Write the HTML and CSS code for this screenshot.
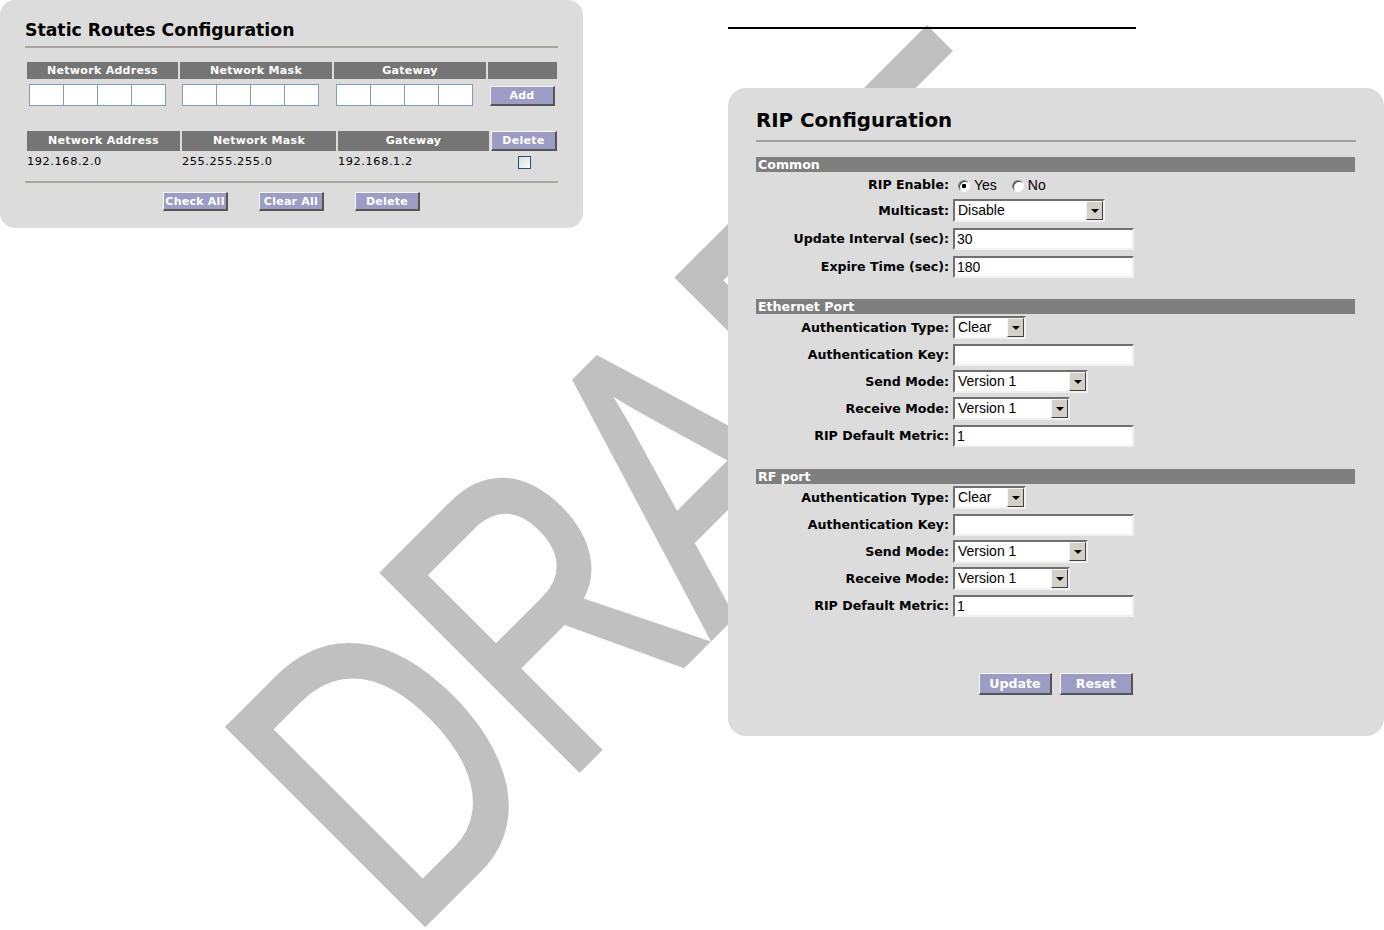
FILE: index.html
```html
<!DOCTYPE html>
<html lang="en">
	<head>
		<meta charset="utf-8">
		<title>Static Routes / RIP Configuration</title>
		<link rel="stylesheet" href="styles.css">
	</head>
	<body>

		<div class="page">

			<div class="watermark">D<span class="wm-r">R</span><span class="wm-a">A</span><span class="wm-f">F</span>T</div>

			<!-- static routes -->
			<div class="col-left">
				<div class="panel static-panel">
					<h2 class="static-title">Static Routes Configuration</h2>

					<table class="route-table add-table">
						<colgroup><col style="width:151px"><col style="width:152px"><col style="width:152px"><col style="width:69px"></colgroup>
						<tr>
							<th>Network Address</th>
							<th>Network Mask</th>
							<th>Gateway</th>
							<th></th>
						</tr>
						<tr>
							<td><div class="ip-group"><input class="ip-box" type="text"><input class="ip-box" type="text"><input class="ip-box" type="text"><input class="ip-box" type="text"></div></td>
							<td><div class="ip-group"><input class="ip-box" type="text"><input class="ip-box" type="text"><input class="ip-box" type="text"><input class="ip-box" type="text"></div></td>
							<td><div class="ip-group"><input class="ip-box" type="text"><input class="ip-box" type="text"><input class="ip-box" type="text"><input class="ip-box" type="text"></div></td>
							<td><button class="btn btn-add">Add</button></td>
						</tr>
					</table>

					<table class="route-table list-table">
						<colgroup><col style="width:153px"><col style="width:154px"><col style="width:151px"><col style="width:66px"></colgroup>
						<tr>
							<th>Network Address</th>
							<th>Network Mask</th>
							<th>Gateway</th>
							<th class="th-btn">Delete</th>
						</tr>
						<tr>
							<td>192.168.2.0</td>
							<td>255.255.255.0</td>
							<td>192.168.1.2</td>
							<td><input class="check" type="checkbox"></td>
						</tr>
					</table>

					<div class="rule"></div>

					<div class="btn-row">
						<button class="btn">Check All</button>
						<button class="btn">Clear All</button>
						<button class="btn">Delete</button>
					</div>
				</div>
			</div>

			<!-- rip -->
			<div class="col-right">
				<div class="top-rule"></div>

				<div class="panel rip-panel">
					<h2 class="rip-title">RIP Configuration</h2>

					<div class="section section-first">
						<div class="section-bar">Common</div>
						<div class="form-rows common-rows">
							<div class="form-row radio-row">
								<label>RIP Enable:</label>
								<div class="radio-group">
									<input class="radio" type="radio" name="rip" checked><span>Yes</span>
									<input class="radio radio-no" type="radio" name="rip"><span>No</span>
								</div>
							</div>
							<div class="form-row">
								<label>Multicast:</label>
								<div class="select w-multi"><span class="select-value">Disable</span><span class="select-arrow"></span></div>
							</div>
							<div class="form-row">
								<label>Update Interval (sec):</label>
								<input class="text-input" type="text" value="30">
							</div>
							<div class="form-row">
								<label>Expire Time (sec):</label>
								<input class="text-input" type="text" value="180">
							</div>
						</div>
					</div>

					<div class="section">
						<div class="section-bar">Ethernet Port</div>
						<div class="form-rows">
							<div class="form-row">
								<label>Authentication Type:</label>
								<div class="select w-auth"><span class="select-value">Clear</span><span class="select-arrow"></span></div>
							</div>
							<div class="form-row">
								<label>Authentication Key:</label>
								<input class="text-input" type="text">
							</div>
							<div class="form-row">
								<label>Send Mode:</label>
								<div class="select w-send"><span class="select-value">Version 1</span><span class="select-arrow"></span></div>
							</div>
							<div class="form-row">
								<label>Receive Mode:</label>
								<div class="select w-recv"><span class="select-value">Version 1</span><span class="select-arrow"></span></div>
							</div>
							<div class="form-row">
								<label>RIP Default Metric:</label>
								<input class="text-input" type="text" value="1">
							</div>
						</div>
					</div>

					<div class="section section-rf">
						<div class="section-bar">RF port</div>
						<div class="form-rows">
							<div class="form-row">
								<label>Authentication Type:</label>
								<div class="select w-auth"><span class="select-value">Clear</span><span class="select-arrow"></span></div>
							</div>
							<div class="form-row">
								<label>Authentication Key:</label>
								<input class="text-input" type="text">
							</div>
							<div class="form-row">
								<label>Send Mode:</label>
								<div class="select w-send"><span class="select-value">Version 1</span><span class="select-arrow"></span></div>
							</div>
							<div class="form-row">
								<label>Receive Mode:</label>
								<div class="select w-recv"><span class="select-value">Version 1</span><span class="select-arrow"></span></div>
							</div>
							<div class="form-row">
								<label>RIP Default Metric:</label>
								<input class="text-input" type="text" value="1">
							</div>
						</div>
					</div>

					<div class="rip-buttons">
						<button class="btn btn-lg">Update</button>
						<button class="btn btn-lg">Reset</button>
					</div>
				</div>
			</div>

		</div>

	</body>
</html>
```

FILE: styles.css
```css
body {
	margin: 0;
	background-color: #fff;
	color: #000;
	font-family: "DejaVu Sans", Verdana, sans-serif;
}

.page {
	position: relative;
	display: flex;
	align-items: flex-start;
	gap: 145px;
	width: 1384px;
	height: 930px;
	overflow: hidden;
}

/* big grey DRAFT stamp behind everything */
.watermark {
	position: absolute;
	left: 0;
	top: 0;
	z-index: 0;
	font-family: "Liberation Sans", Arial, sans-serif;
	font-size: 403px;
	line-height: 1;
	color: #c0c0c0;
	-webkit-text-stroke: 6px #c0c0c0;
	white-space: nowrap;
	transform-origin: 0 0;
	transform: translate(166px, 700px) rotate(-45deg) scaleX(0.75);
	pointer-events: none;
}

.wm-r { letter-spacing: -0.023em; }
.wm-a { letter-spacing: 0.015em; }
.wm-f { letter-spacing: 0.05em; }

.col-left,
.col-right {
	position: relative;
	z-index: 1;
}

.col-left {
	width: 583px;
}

.col-right {
	width: 656px;
}

.panel {
	background-color: #dcdcdc;
	border-radius: 15px;
	box-sizing: border-box;
}

/* ---- static routes ---- */

.static-panel {
	width: 583px;
	height: 228px;
	padding: 19px 25px 0;
}

.static-title {
	margin: 0;
	font-size: 17.3px;
	font-weight: bold;
	line-height: 22px;
	padding-bottom: 5px;
	border-bottom: 2px solid #a8a59d;
}

.route-table {
	table-layout: fixed;
	border-collapse: separate;
	border-spacing: 2px;
	width: 534px;
}

.route-table th {
	padding: 0;
	background-color: #757575;
	color: #fff;
	font-size: 11px;
	font-weight: bold;
	letter-spacing: 0.3px;
	text-align: center;
}

.route-table td {
	padding: 0;
	vertical-align: top;
}

.add-table {
	margin-top: 12px;
}

.add-table th {
	line-height: 17px;
}

.add-table td {
	padding: 3px 0 0 2px;
}

.ip-group {
	display: flex;
}

.ip-box {
	width: 35px;
	height: 22px;
	box-sizing: border-box;
	margin: 0 0 0 -1px;
	padding: 0;
	border: 1px solid #7f9db9;
	background-color: #fff;
}

.ip-box:first-child {
	margin-left: 0;
}

.list-table {
	margin-top: 21px;
}

.list-table th {
	line-height: 20px;
}

.list-table th.th-btn {
	line-height: 17px;
	background-color: #9c9cc4;
	border: 1px solid;
	border-width: 1px 2px 2px 1px;
	border-color: #f5f5f5 #555 #555 #f5f5f5;
}

.list-table td {
	line-height: 18px;
	font-size: 11.3px;
	letter-spacing: 0.6px;
}

.check {
	appearance: none;
	display: block;
	width: 13px;
	height: 13px;
	margin: 3px auto 0;
	border: 1px solid #1c5180;
	background: linear-gradient(135deg, #dcdcd7, #fbfbf9);
}

.rule {
	height: 2px;
	margin-top: 8px;
	background-color: #a8a59d;
}

.btn-row {
	display: flex;
	justify-content: center;
	gap: 31px;
	margin-top: 9px;
}

.btn {
	width: 65px;
	height: 19px;
	padding: 0;
	background-color: #9c9cc4;
	color: #fff;
	font-family: "DejaVu Sans", Verdana, sans-serif;
	font-size: 11px;
	font-weight: bold;
	letter-spacing: 0.25px;
	border: 1px solid;
	border-width: 1px 2px 2px 1px;
	border-color: #f5f5f5 #555 #555 #f5f5f5;
}

.btn-add {
	height: 20px;
	margin-top: 1px;
}

/* ---- RIP ---- */

.top-rule {
	width: 408px;
	height: 2px;
	margin-top: 27px;
	background-color: #000;
}

.rip-panel {
	width: 656px;
	height: 648px;
	margin-top: 59px;
	padding: 21px 28px 0;
	border-radius: 18px;
}

.rip-title {
	margin: 0;
	font-size: 19.8px;
	font-weight: bold;
	line-height: 24px;
	padding-bottom: 7px;
	border-bottom: 2px solid #a0a0a0;
}

.section {
	margin-top: 21px;
}

.section-first {
	margin-top: 15px;
}

.section-rf {
	margin-top: 22px;
}

.section-bar {
	width: 597px;
	height: 15px;
	padding-left: 2px;
	background-color: #7f7f7f;
	color: #fff;
	font-size: 12.6px;
	font-weight: bold;
	line-height: 15px;
}

.form-rows {
	display: flex;
	flex-direction: column;
	gap: 4px;
	margin-top: 2px;
}

.common-rows {
	gap: 5px;
	margin-top: 4px;
}

.form-row {
	display: grid;
	grid-template-columns: 193px auto;
	column-gap: 4px;
	align-items: center;
	height: 23px;
}

.form-row.radio-row {
	height: 18px;
}

.form-row label {
	text-align: right;
	font-size: 12.6px;
	font-weight: bold;
	line-height: 18px;
	white-space: nowrap;
}

.radio-group {
	display: flex;
	align-items: center;
	padding-left: 5px;
	font-family: "Liberation Sans", Arial, sans-serif;
	font-size: 14px;
	line-height: 18px;
}

.radio {
	appearance: none;
	width: 12px;
	height: 12px;
	margin: 1px 4px 0 0;
	border-radius: 50%;
	border: 1px solid;
	border-color: #808080 #fff #fff #808080;
	box-sizing: border-box;
	background-color: #fff;
	box-shadow: inset 1px 1px 0 #404040;
}

.radio:checked {
	background: radial-gradient(circle, #000 0 2px, #fff 2.5px);
}

.radio-no {
	margin-left: 15px;
}

.text-input {
	width: 181px;
	height: 22px;
	box-sizing: border-box;
	margin: 0;
	padding: 0 2px;
	border: 2px solid;
	border-color: #6f6f6f #f0f0f0 #f0f0f0 #6f6f6f;
	background-color: #fff;
	font-family: "Liberation Sans", Arial, sans-serif;
	font-size: 14px;
	color: #000;
}

.select {
	display: flex;
	height: 23px;
	box-sizing: border-box;
	border: 2px solid;
	border-color: #6f6f6f #f0f0f0 #f0f0f0 #6f6f6f;
	background-color: #fff;
	font-family: "Liberation Sans", Arial, sans-serif;
	font-size: 14px;
}

.w-multi { width: 152px; }
.w-auth { width: 73px; }
.w-send { width: 135px; }
.w-recv { width: 117px; }

.select-value {
	flex: 1;
	padding-left: 3px;
	line-height: 19px;
}

.select-arrow {
	display: flex;
	align-items: center;
	justify-content: center;
	width: 17px;
	box-sizing: border-box;
	background-color: #d4d0c8;
	border: 1px solid;
	border-color: #f4f4f4 #404040 #404040 #f4f4f4;
}

.select-arrow::after {
	content: "";
	border-left: 4px solid transparent;
	border-right: 4px solid transparent;
	border-top: 4px solid #000;
}

.rip-buttons {
	display: flex;
	justify-content: center;
	gap: 8px;
	margin-top: 56px;
}

.btn-lg {
	width: 73px;
	height: 22px;
	font-size: 12.6px;
	letter-spacing: 0;
}
```
